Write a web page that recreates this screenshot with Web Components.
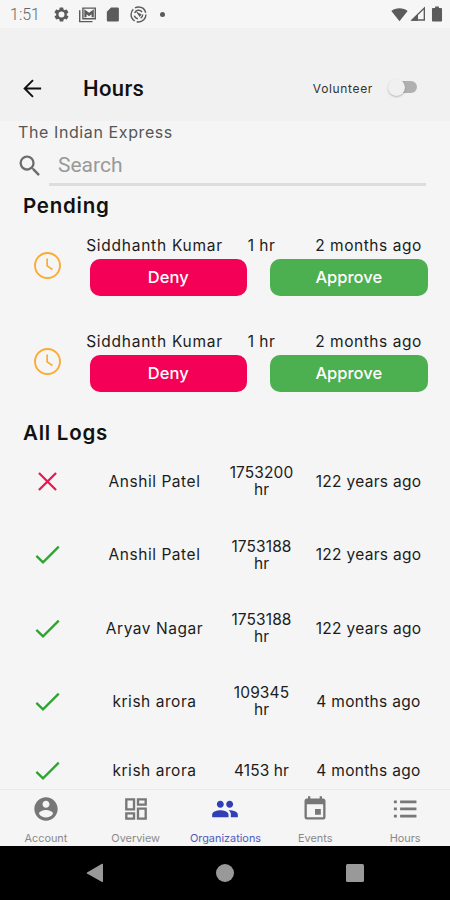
<!DOCTYPE html>
<html lang="en">
<head>
<meta charset="utf-8">
<title>Hours</title>
<style>
  html, body { margin: 0; height: 100%; }
  body {
    background: #f5f5f5;
    color: #1c1c1c;
    font-family: Inter, "Liberation Sans", sans-serif;
    overflow: hidden;
  }
</style>
</head>
<body>
<hours-screen></hours-screen>

<script>
const ICONS = {
  gear: '<path fill-rule="evenodd" d="M19.4 13a7.500 7.500 0 0 0 0-2l2.100-1.600c.2-.2.2-.4.1-.6l-2-3.500c-.1-.2-.4-.3-.6-.2l-2.500 1a7 7 0 0 0-1.700-1l-.4-2.600a.5.5 0 0 0-.5-.5h-4a.5.5 0 0 0-.5.5l-.4 2.600a7 7 0 0 0-1.700 1l-2.500-1c-.2-.1-.5 0-.6.2l-2 3.500c-.1.2-.1.4.1.6L4.500 11a7.500 7.500 0 0 0 0 2l-2.100 1.600c-.2.2-.2.4-.1.6l2 3.500c.1.2.4.3.6.2l2.500-1a7 7 0 0 0 1.700 1l.4 2.600c0 .3.2.5.5.5h4c.3 0 .5-.2.5-.5l.4-2.600a7 7 0 0 0 1.700-1l2.500 1c.2.1.5 0 .6-.2l2-3.500c.1-.2.1-.4-.1-.6zM12 16.200a4.200 4.200 0 1 1 0-8.400 4.200 4.200 0 0 1 0 8.400z"/>',
  gmail: '<path d="M1 6v16h18" fill="none" stroke="currentColor" stroke-width="2"/><path d="M5.500 3h17.500v15H5.500z" fill="none" stroke="currentColor" stroke-width="2"/><path d="M7.500 16V4.500l6.700 5 6.700-5V16h-3.200v-4.500l-3.500 2.800-3.500-2.800V16z"/>',
  sdcard: '<path d="M19 2h-9L4 8v12c0 1.100.9 2 2 2h13c1.100 0 2-.9 2-2V4c0-1.100-.9-2-2-2z"/>',
  sync: '<g fill="none" stroke="currentColor"><circle cx="12" cy="12" r="10.500" stroke-width="2" stroke-dasharray="19 3"/><path d="M6.500 10a6 6 0 0 1 10.500-1.500M18 12a6 6 0 0 1-3 5M6.200 13.500a6 6 0 0 0 5 4.500" stroke-width="2"/></g><path d="M8 7.500l8.500 4.500-3 3.500-2-3z"/>',
  wifi: '<path d="M12 21.500 .5 7C3.500 4.300 7.500 3 12 3s8.500 1.300 11.500 4z"/>',
  signal: '<path d="M3 21 21.500 3v18z" fill="none" stroke="currentColor" stroke-width="2"/><path d="M2 22l10-10v10z"/>',
  battery: '<path d="M17.200 4H14.500V2h-5v2H6.800C5.800 4 5.300 4.600 5.300 5.400V20.600c0 .8.600 1.400 1.400 1.400h10.600c.8 0 1.400-.6 1.400-1.400V5.400C18.700 4.600 18.100 4 17.200 4z"/>',
  back: '<path d="M21 12H4M12.500 3.300 3.800 12l8.700 8.700" fill="none" stroke="currentColor" stroke-width="2"/>',
  search: '<path d="M15.500 14h-.79l-.28-.27A6.471 6.471 0 0 0 16 9.500 6.500 6.500 0 1 0 9.500 16c1.610 0 3.090-.59 4.230-1.570l.27.28v.79l5 4.990L20.490 19l-4.990-5zm-6 0C7.010 14 5 11.990 5 9.500S7.010 5 9.500 5 14 7.010 14 9.500 11.990 14 9.500 14z"/>',
  clock: '<g fill="none" stroke="currentColor" stroke-width="1.700"><circle cx="12" cy="12" r="11.100"/><path d="M11.700 5.800v6.500l4.700 3.200" stroke-width="1.500"/></g>',
  close: '<path d="M3.800 3.800l16.400 16.400M20.200 3.800 3.800 20.200" fill="none" stroke="currentColor" stroke-width="2.200"/>',
  check: '<path d="M2.100 13.200l5.900 5.800L22 5" fill="none" stroke="currentColor" stroke-width="2"/>',
  account: '<path d="M12 2C6.480 2 2 6.480 2 12s4.480 10 10 10 10-4.480 10-10S17.520 2 12 2zm0 3c1.660 0 3 1.340 3 3s-1.340 3-3 3-3-1.340-3-3 1.340-3 3-3zm0 14.200a7.200 7.200 0 0 1-6-3.220c.03-1.990 4-3.080 6-3.080 1.990 0 5.970 1.090 6 3.080a7.200 7.200 0 0 1-6 3.220z"/>',
  overview: '<path d="M19.300 4.700v2.600h-4.600V4.700h4.600M9.300 4.700v6.600H4.700V4.700h4.600m10 8v6.600h-4.600v-6.600h4.600M9.300 16.700v2.600H4.700v-2.600h4.600M21.300 2.700h-8.600v6.600h8.600V2.700zM11.300 2.700H2.700v10.600h8.600V2.700zm10 8h-8.600v10.600h8.600V10.700zm-10 4H2.700v6.600h8.600v-6.600z"/>',
  people: '<path d="M16 11c1.660 0 2.990-1.340 2.990-3S17.660 5 16 5s-3 1.340-3 3 1.340 3 3 3zm-8 0c1.660 0 2.990-1.340 2.990-3S9.660 5 8 5 5 6.340 5 8s1.340 3 3 3zm0 2c-2.330 0-7 1.170-7 3.500V19h14v-2.500c0-2.330-4.670-3.500-7-3.500zm8 0c-.29 0-.62.02-.97.05 1.160.84 1.970 1.970 1.970 3.450V19h6v-2.500c0-2.330-4.670-3.500-7-3.500z"/>',
  events: '<path d="M17 12h-5v5h5v-5zM16 1v2H8V1H6v2H5c-1.110 0-1.990.9-1.990 2L3 19a2 2 0 0 0 2 2h14c1.100 0 2-.9 2-2V5c0-1.100-.9-2-2-2h-1V1h-2zm3 18H5V8h14v11z"/>',
  list: '<path d="M2.500 4.700h2.500v2.300H2.500zm0 6.100h2.500v2.300H2.500zm0 6.200h2.500v2.300H2.500zM7.800 4.700H21.800v2.300H7.800zm0 6.100H21.800v2.300H7.800zm0 6.200H21.800v2.300H7.800z"/>'
};

// <ui-icon name="gear" size="16">
class UiIcon extends HTMLElement {
  connectedCallback() {
    const size = this.getAttribute('size') || 24;
    this.attachShadow({ mode: 'open' }).innerHTML = `
      <style>
        :host { display: block; flex: none; width: ${size}px; height: ${size}px; }
        svg { display: block; width: 100%; height: 100%; overflow: visible; }
      </style>
      <svg viewBox="0 0 24 24" fill="currentColor" aria-hidden="true">${ICONS[this.getAttribute('name')]}</svg>
    `;
  }
}

class StatusBar extends HTMLElement {
  connectedCallback() {
    this.attachShadow({ mode: 'open' }).innerHTML = `
      <style>
        :host {
          display: flex;
          align-items: center;
          box-sizing: border-box;
          height: 28px;
          padding: 0 4px 0 10px;
          color: #5b5b5b;
          background: #f6f6f6;
        }
        time { font: 300 16px/28px Roboto, sans-serif; color: #666; width: 43px; padding-top: 2px; }
        .left { display: flex; align-items: center; gap: 8.500px; }
        .dot { width: 5px; height: 5px; border-radius: 50%; background: currentColor; margin-left: 5px; }
        .right { display: flex; align-items: center; margin-left: auto; gap: 2px; }
      </style>
      <time>1:51</time>
      <div class="left">
        <ui-icon name="gear" size="17"></ui-icon>
        <ui-icon name="gmail" size="17"></ui-icon>
        <ui-icon name="sdcard" size="17"></ui-icon>
        <ui-icon name="sync" size="17"></ui-icon>
        <span class="dot"></span>
      </div>
      <div class="right">
        <ui-icon name="wifi" size="17"></ui-icon>
        <ui-icon name="signal" size="16"></ui-icon>
        <ui-icon name="battery" size="18"></ui-icon>
      </div>
    `;
  }
}

class ToggleSwitch extends HTMLElement {
  connectedCallback() {
    this.attachShadow({ mode: 'open' }).innerHTML = `
      <style>
        :host { display: flex; align-items: center; width: 29px; height: 20px; margin-top: -2px; }
        .track { flex: 1; height: 12px; margin-left: 3px; border-radius: 6px; background: #b0b0b0; }
        .thumb {
          flex: none;
          width: 17px; height: 17px;
          margin-left: -29px;
          margin-right: 12px;
          border-radius: 50%;
          background: #f0f0f0;
          box-shadow: 0 1px 2px rgba(0, 0, 0, 0.25);
        }
      </style>
      <span class="track"></span><span class="thumb"></span>
    `;
  }
}

class AppHeader extends HTMLElement {
  connectedCallback() {
    this.attachShadow({ mode: 'open' }).innerHTML = `
      <style>
        :host {
          display: flex;
          align-items: center;
          box-sizing: border-box;
          height: 93px;
          padding: 27px 33px 0 21px;
          background: #f1f1f1;
          color: #111;
        }
        h1 { margin: 1px 0 0 39px; font: 500 22px/30px Roboto, sans-serif; letter-spacing: 0.35px; }
        .label { margin-left: auto; margin-right: 15px; font-size: 12px; letter-spacing: 0.65px; color: #333; }
      </style>
      <ui-icon name="back" size="23"></ui-icon>
      <h1><slot></slot></h1>
      <span class="label">Volunteer</span>
      <toggle-switch></toggle-switch>
    `;
  }
}

class SearchField extends HTMLElement {
  connectedCallback() {
    this.attachShadow({ mode: 'open' }).innerHTML = `
      <style>
        :host { display: flex; align-items: center; height: 43px; padding: 0 24px 0 16px; color: #6c6c6c; }
        ui-icon { margin-top: 2px; }
        .field {
          flex: 1;
          box-sizing: border-box;
          height: 43px;
          margin-left: 5px;
          padding-left: 9px;
          border-bottom: 3px solid #dddddd;
          font: 400 21px/45px Roboto, sans-serif;
          color: #999;
        }
      </style>
      <ui-icon name="search" size="28"></ui-icon>
      <div class="field"><slot></slot></div>
    `;
  }
}

class SectionTitle extends HTMLElement {
  connectedCallback() {
    this.attachShadow({ mode: 'open' }).innerHTML = `
      <style>
        :host { display: block; height: 37px; padding-left: 23px; color: #111; }
        h2 { margin: 0; font-size: 20.500px; line-height: 39px; font-weight: 600; letter-spacing: 0.75px; white-space: nowrap; }
      </style>
      <h2><slot></slot></h2>
    `;
  }
}

// Row cells shared by pending requests and finished logs
const ROW_STYLE = `
  .cells { display: grid; grid-template-columns: repeat(3, 107px); font-size: 15.500px; line-height: 17px; }
  .cells span { display: flex; align-items: center; justify-content: center; text-align: center; }
  .nowrap { white-space: nowrap; }
  .name { letter-spacing: 0.55px; }
  .ago { letter-spacing: 0.3px; }
  .icon { display: flex; justify-content: center; width: 95px; }
`;

class PendingRow extends HTMLElement {
  connectedCallback() {
    const { name, hours, ago } = this.dataset;
    this.attachShadow({ mode: 'open' }).innerHTML = `
      <style>
        ${ROW_STYLE}
        :host { display: flex; height: 96.300px; }
        .icon { padding-top: 28.500px; color: #fbab34; }
        .cells { height: 18px; margin: 13.500px 0 0 6px; }
        .name { letter-spacing: 0.75px; }
        .hours { letter-spacing: 0.5px; }
        .ago { letter-spacing: 0.55px; }
        .actions { display: flex; gap: 23px; margin: 4.500px 0 0 -5.500px; }
        button {
          width: 157.500px; height: 37px;
          padding: 0;
          border: 0;
          border-radius: 10px;
          color: #fff;
          font: 500 16.500px/37px Inter, sans-serif;
        }
        .deny { background: #f50057; }
        .approve { background: #4caf50; }
      </style>
      <div class="icon"><ui-icon name="clock" size="27"></ui-icon></div>
      <div>
        <div class="cells nowrap"><span class="name">${name}</span><span class="hours">${hours}</span><span class="ago">${ago}</span></div>
        <div class="actions">
          <button class="deny">Deny</button>
          <button class="approve">Approve</button>
        </div>
      </div>
    `;
  }
}

class LogRow extends HTMLElement {
  connectedCallback() {
    const { name, hours, ago, status } = this.dataset;
    const denied = status === 'denied';
    this.attachShadow({ mode: 'open' }).innerHTML = `
      <style>
        ${ROW_STYLE}
        :host { display: flex; align-items: center; height: var(--row-height, 73.400px); }
        .icon { color: ${denied ? '#ee1555' : '#2ba52e'}; }
        .cells { margin-left: 6px; }
        .hours { padding: 0 19px; letter-spacing: 0.1px; }
      </style>
      <div class="icon"><ui-icon name="${denied ? 'close' : 'check'}" size="${denied ? 25 : 27}"></ui-icon></div>
      <div class="cells"><span class="name">${name}</span><span class="hours">${hours}</span><span class="ago nowrap">${ago}</span></div>
    `;
  }
}

class TabItem extends HTMLElement {
  connectedCallback() {
    this.attachShadow({ mode: 'open' }).innerHTML = `
      <style>
        :host {
          display: flex;
          flex-direction: column;
          align-items: center;
          color: #777;
          font-size: 10.900px;
          line-height: 14px;
        }
        :host([active]) { color: #303fb5; }
        .label { margin-top: 8px; opacity: 0.85; white-space: nowrap; }
      </style>
      <ui-icon name="${this.getAttribute('icon')}" size="28"></ui-icon>
      <span class="label"><slot></slot></span>
    `;
  }
}

class TabBar extends HTMLElement {
  connectedCallback() {
    this.attachShadow({ mode: 'open' }).innerHTML = `
      <style>
        :host {
          display: grid;
          grid-template-columns: repeat(5, 1fr);
          box-sizing: border-box;
          height: 57px;
          padding: 5px 0 0 1px;
          border-top: 1px solid #e9e9e9;
          background: #f5f5f5;
        }
      </style>
      <slot></slot>
    `;
  }
}

class SystemNav extends HTMLElement {
  connectedCallback() {
    this.attachShadow({ mode: 'open' }).innerHTML = `
      <style>
        :host { display: flex; align-items: center; justify-content: center; height: 54px; gap: 112px; background: #000; }
        svg { display: block; width: 18px; height: 20px; fill: #999; }
      </style>
      <svg viewBox="0 0 18 20"><path d="M1 9.500 16 .8q1-.5 1 .6v17q0 1-1 .5L1 10.500q-.8-.5 0-1z"/></svg>
      <svg viewBox="0 0 18 20"><circle cx="9" cy="10" r="9"/></svg>
      <svg viewBox="0 0 18 20"><rect y="1" width="18" height="18" rx="1.500"/></svg>
    `;
  }
}

const PENDING = [
  { name: 'Siddhanth Kumar', hours: '1 hr', ago: '2 months ago' },
  { name: 'Siddhanth Kumar', hours: '1 hr', ago: '2 months ago' }
];

const LOGS = [
  { status: 'denied', name: 'Anshil Patel', hours: '1753200 hr', ago: '122 years ago' },
  { status: 'approved', name: 'Anshil Patel', hours: '1753188 hr', ago: '122 years ago' },
  { status: 'approved', name: 'Aryav Nagar', hours: '1753188 hr', ago: '122 years ago' },
  { status: 'approved', name: 'krish arora', hours: '109345 hr', ago: '4 months ago' },
  { status: 'approved', name: 'krish arora', hours: '4153 hr', ago: '4 months ago' }
];

class HoursScreen extends HTMLElement {
  _rows(tag, items) {
    return items.map(item => {
      const data = Object.entries(item).map(([key, value]) => `data-${key}="${value}"`).join(' ');
      return `<${tag} ${data}></${tag}>`;
    }).join('');
  }

  connectedCallback() {
    this.attachShadow({ mode: 'open' }).innerHTML = `
      <style>
        :host { display: flex; flex-direction: column; height: 900px; }
        main { flex: 1; min-height: 0; overflow: hidden; }
        .org { height: 22px; padding-left: 18px; font-size: 16px; line-height: 22px; color: #555; letter-spacing: 0.6px; }
        .logs { margin-top: -5px; }
        log-row:last-child { --row-height: 65px; }
      </style>
      <status-bar></status-bar>
      <app-header>Hours</app-header>
      <main>
        <div class="org">The Indian Express</div>
        <search-field>Search</search-field>
        <section-title>Pending</section-title>
        ${this._rows('pending-row', PENDING)}
        <section-title style="margin-top: -3px">All Logs</section-title>
        <div class="logs">${this._rows('log-row', LOGS)}</div>
      </main>
      <tab-bar>
        <tab-item icon="account">Account</tab-item>
        <tab-item icon="overview">Overview</tab-item>
        <tab-item icon="people" active>Organizations</tab-item>
        <tab-item icon="events">Events</tab-item>
        <tab-item icon="list">Hours</tab-item>
      </tab-bar>
      <system-nav></system-nav>
    `;
  }
}

customElements.define('ui-icon', UiIcon);
customElements.define('status-bar', StatusBar);
customElements.define('toggle-switch', ToggleSwitch);
customElements.define('app-header', AppHeader);
customElements.define('search-field', SearchField);
customElements.define('section-title', SectionTitle);
customElements.define('pending-row', PendingRow);
customElements.define('log-row', LogRow);
customElements.define('tab-item', TabItem);
customElements.define('tab-bar', TabBar);
customElements.define('system-nav', SystemNav);
customElements.define('hours-screen', HoursScreen);
</script>
</body>
</html>
